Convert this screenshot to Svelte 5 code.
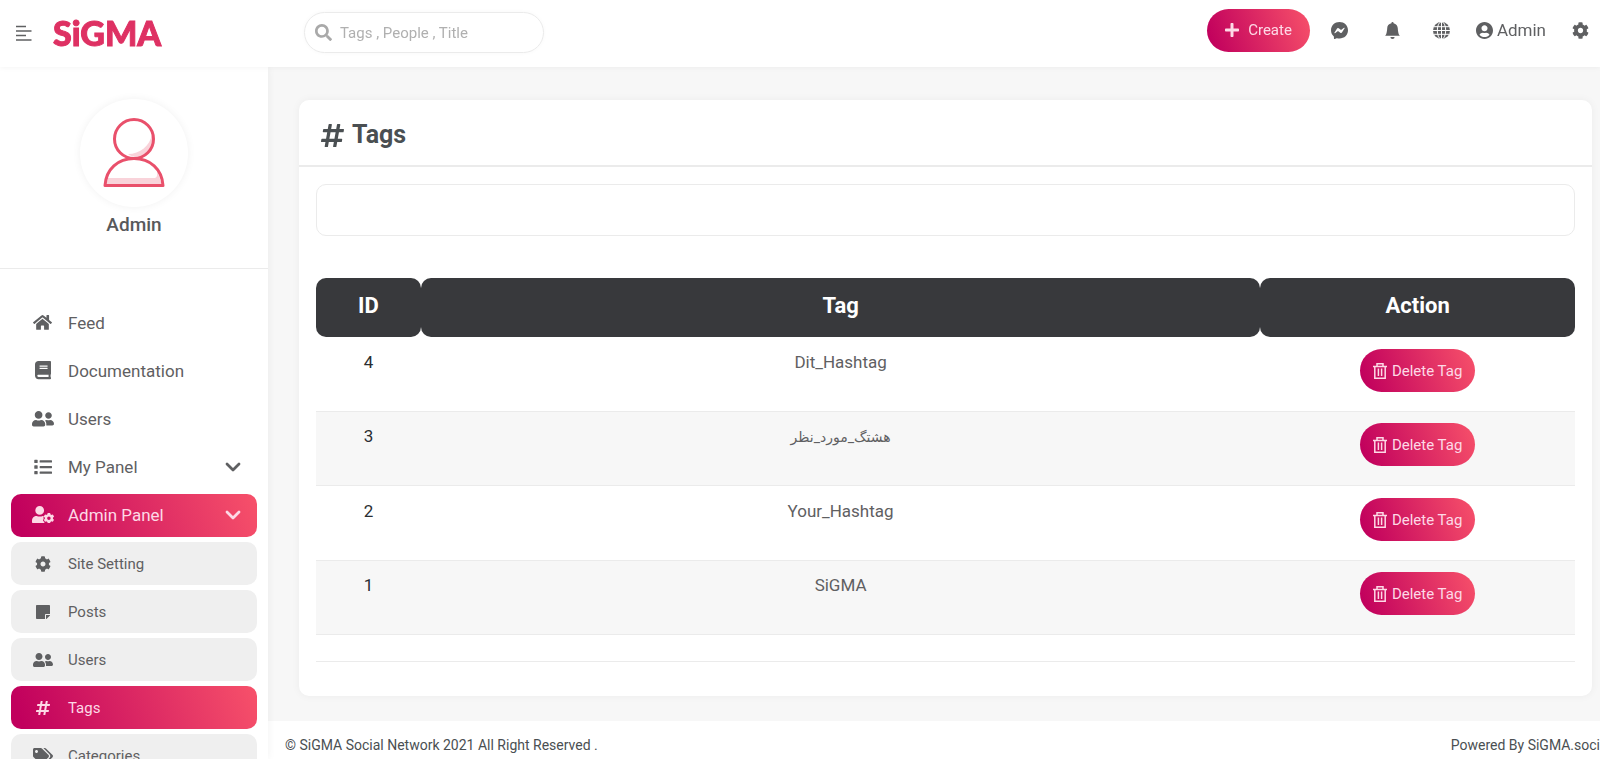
<script>

    let search = $state('')
    let tagFilter = $state('')

    const mainLinks = [
        {title: 'Feed', icon: 'home', size: 19},
        {title: 'Documentation', icon: 'book', size: 16},
        {title: 'Users', icon: 'users', size: 22},
        {title: 'My Panel', icon: 'list', size: 18, arrow: true},
        {title: 'Admin Panel', icon: 'userCog', size: 22, arrow: true, active: true}
    ]

    const subLinks = [
        {title: 'Site Setting', icon: 'cog', size: 16},
        {title: 'Posts', icon: 'note', size: 14},
        {title: 'Users', icon: 'users', size: 20},
        {title: 'Tags', icon: 'hashtag', size: 14, active: true},
        {title: 'Categories', icon: 'tags', size: 20}
    ]

    const tags = [
        {id: 4, name: 'Dit_Hashtag'},
        {id: 3, name: 'هشتگ_مورد_نظر', lang: 'fa'},
        {id: 2, name: 'Your_Hashtag'},
        {id: 1, name: 'SiGMA'}
    ]

    const cog = 'M487.4 315.7l-42.6-24.6c4.3-23.2 4.3-47 0-70.2l42.6-24.6c4.9-2.8 7.1-8.6 5.5-14-11.1-35.6-30-67.8-54.7-94.6-3.8-4.1-10-5.1-14.8-2.3L380.8 110c-17.9-15.4-38.5-27.3-60.8-35.1V25.8c0-5.6-3.9-10.5-9.4-11.7-36.7-8.2-74.3-7.8-109.2 0-5.5 1.2-9.4 6.1-9.4 11.7V75c-22.2 7.9-42.8 19.8-60.8 35.1L88.7 85.5c-4.9-2.8-11-1.9-14.8 2.3-24.7 26.7-43.6 58.9-54.7 94.6-1.7 5.4.6 11.2 5.5 14L67.3 221c-4.3 23.2-4.3 47 0 70.2l-42.6 24.6c-4.9 2.8-7.1 8.6-5.5 14 11.1 35.6 30 67.8 54.7 94.6 3.8 4.1 10 5.1 14.8 2.3l42.6-24.6c17.9 15.4 38.5 27.3 60.8 35.1v49.2c0 5.6 3.9 10.5 9.4 11.7 36.7 8.2 74.3 7.8 109.2 0 5.5-1.2 9.4-6.1 9.4-11.7v-49.2c22.2-7.9 42.8-19.8 60.8-35.1l42.6 24.6c4.9 2.8 11 1.9 14.8-2.3 24.7-26.7 43.6-58.9 54.7-94.6 1.5-5.5-.7-11.3-5.6-14.1zM256 336c-44.1 0-80-35.9-80-80s35.9-80 80-80 80 35.9 80 80-35.9 80-80 80z'

    const icons = {
        cog: {box: '0 0 512 512', path: cog},
        search: {box: '0 0 512 512', path: 'M505 442.7L405.3 343c-4.5-4.5-10.6-7-17-7H372c27.6-35.3 44-79.7 44-128C416 93.1 322.9 0 208 0S0 93.1 0 208s93.1 208 208 208c48.3 0 92.7-16.4 128-44v16.3c0 6.4 2.5 12.5 7 17l99.7 99.7c9.4 9.4 24.6 9.4 33.9 0l28.3-28.3c9.4-9.4 9.4-24.6.1-34zM208 336c-70.7 0-128-57.2-128-128 0-70.7 57.2-128 128-128 70.7 0 128 57.2 128 128 0 70.7-57.2 128-128 128z'},
        plus: {box: '0 0 448 512', path: 'M416 208H272V64c0-17.67-14.33-32-32-32h-32c-17.67 0-32 14.33-32 32v144H32c-17.67 0-32 14.33-32 32v32c0 17.67 14.33 32 32 32h144v144c0 17.67 14.33 32 32 32h32c17.67 0 32-14.33 32-32V304h144c17.67 0 32-14.33 32-32v-32c0-17.67-14.33-32-32-32z'},
        messenger: {box: '0 0 16 16', path: 'M0 7.76C0 3.301 3.493 0 8 0s8 3.301 8 7.76-3.493 7.76-8 7.76c-.81 0-1.586-.107-2.316-.307a.639.639 0 0 0-.427.03l-1.588.702a.64.64 0 0 1-.898-.566l-.044-1.423a.639.639 0 0 0-.215-.456C.956 12.108 0 10.092 0 7.76zm5.546-1.459-2.35 3.728c-.225.358.214.761.551.506l2.525-1.916a.48.48 0 0 1 .578-.002l1.869 1.402a1.2 1.2 0 0 0 1.735-.32l2.35-3.728c.226-.358-.214-.761-.551-.506L9.728 7.381a.48.48 0 0 1-.578.002L7.281 5.98a1.2 1.2 0 0 0-1.735.32z'},
        bell: {box: '0 0 16 16', path: 'M8 16a2 2 0 0 0 2-2H6a2 2 0 0 0 2 2zm.995-14.901a1 1 0 1 0-1.99 0A5.002 5.002 0 0 0 3 6c0 1.098-.5 6-2 7h14c-1.5-1-2-5.902-2-7 0-2.42-1.72-4.44-4.005-4.901z'},
        userCircle: {box: '0 8 496 496', path: 'M248 8C111 8 0 119 0 256s111 248 248 248 248-111 248-248S385 8 248 8zm0 96c48.6 0 88 39.4 88 88s-39.4 88-88 88-88-39.4-88-88 39.4-88 88-88zm0 344c-58.7 0-111.3-26.6-146.5-68.2 18.8-35.4 55.6-59.8 98.5-59.8 2.4 0 4.8.4 7.1 1.1 13 4.2 26.6 6.9 40.9 6.9 14.3 0 28-2.7 40.9-6.9 2.3-.7 4.7-1.1 7.1-1.1 42.9 0 79.7 24.4 98.5 59.8C359.3 421.4 306.7 448 248 448z'},
        home: {box: '0 0 576 512', path: 'M280.37 148.26L96 300.11V464a16 16 0 0 0 16 16l112.06-.29a16 16 0 0 0 15.92-16V368a16 16 0 0 1 16-16h64a16 16 0 0 1 16 16v95.64a16 16 0 0 0 16 16.05L464 480a16 16 0 0 0 16-16V300L295.67 148.26a12.19 12.19 0 0 0-15.3 0zM571.6 251.47L488 182.56V44.05a12 12 0 0 0-12-12h-56a12 12 0 0 0-12 12v72.61L318.47 43a48 48 0 0 0-61 0L4.34 251.47a12 12 0 0 0-1.6 16.9l25.5 31A12 12 0 0 0 45.15 301l235.22-193.74a12.19 12.19 0 0 1 15.3 0L530.9 301a12 12 0 0 0 16.9-1.6l25.5-31a12 12 0 0 0-1.7-16.93z'},
        book: {box: '0 0 448 512', path: 'M448 360V24c0-13.3-10.7-24-24-24H96C43 0 0 43 0 96v320c0 53 43 96 96 96h328c13.3 0 24-10.7 24-24v-16c0-7.5-3.5-14.3-8.9-18.7-4.2-15.4-4.2-59.3 0-74.7 5.4-4.3 8.9-11.1 8.9-18.6zM128 134c0-3.3 2.7-6 6-6h212c3.3 0 6 2.7 6 6v20c0 3.3-2.7 6-6 6H134c-3.3 0-6-2.7-6-6v-20zm0 64c0-3.3 2.7-6 6-6h212c3.3 0 6 2.7 6 6v20c0 3.3-2.7 6-6 6H134c-3.3 0-6-2.7-6-6v-20zm253.4 250H96c-17.7 0-32-14.3-32-32 0-17.6 14.4-32 32-32h285.4c-1.9 17.1-1.9 46.9 0 64z'},
        users: {box: '0 0 640 512', path: 'M192 256c61.9 0 112-50.1 112-112S253.9 32 192 32 80 82.1 80 144s50.1 112 112 112zm76.8 32h-8.3c-20.8 10-43.9 16-68.5 16s-47.6-6-68.5-16h-8.3C51.6 288 0 339.6 0 403.2V432c0 26.5 21.5 48 48 48h288c26.5 0 48-21.5 48-48v-28.8c0-63.6-51.6-115.2-115.2-115.2zM480 256c53 0 96-43 96-96s-43-96-96-96-96 43-96 96 43 96 96 96zm48 32h-3.8c-13.9 4.8-28.6 8-44.2 8s-30.3-3.2-44.2-8H432c-20.4 0-39.2 5.9-55.7 15.4 24.4 26.3 39.7 61.2 39.7 99.8v38.4c0 2.2-.5 4.3-.6 6.4H592c26.5 0 48-21.5 48-48 0-61.9-50.1-112-112-112z'},
        list: {box: '0 0 512 512', path: 'M24 48h64a16 16 0 0 1 16 16v64a16 16 0 0 1-16 16H24a16 16 0 0 1-16-16V64a16 16 0 0 1 16-16zm0 160h64a16 16 0 0 1 16 16v64a16 16 0 0 1-16 16H24a16 16 0 0 1-16-16v-64a16 16 0 0 1 16-16zm0 160h64a16 16 0 0 1 16 16v64a16 16 0 0 1-16 16H24a16 16 0 0 1-16-16v-64a16 16 0 0 1 16-16zM176 64h320a16 16 0 0 1 16 16v32a16 16 0 0 1-16 16H176a16 16 0 0 1-16-16V80a16 16 0 0 1 16-16zm0 160h320a16 16 0 0 1 16 16v32a16 16 0 0 1-16 16H176a16 16 0 0 1-16-16v-32a16 16 0 0 1 16-16zm0 160h320a16 16 0 0 1 16 16v32a16 16 0 0 1-16 16H176a16 16 0 0 1-16-16v-32a16 16 0 0 1 16-16z'},
        note: {box: '0 32 448 448', path: 'M312 320h136V56c0-13.3-10.7-24-24-24H24C10.7 32 0 42.7 0 56v400c0 13.3 10.7 24 24 24h264V344c0-13.2 10.8-24 24-24zm129 55l-98 98c-4.5 4.5-10.6 7-17 7h-6V352h128v6.1c0 6.3-2.5 12.4-7 16.9z'},
        hashtag: {box: '0 32 448 448', path: 'M440.667 182.109l7.143-40c1.313-7.355-4.342-14.109-11.813-14.109h-74.81l14.623-81.891C377.123 38.754 371.468 32 363.997 32h-40.632a12 12 0 0 0-11.813 9.891L296.175 128H197.54l14.623-81.891C213.477 38.754 207.822 32 200.35 32h-40.632a12 12 0 0 0-11.813 9.891L132.528 128H53.432a12 12 0 0 0-11.813 9.891l-7.143 40C33.163 185.246 38.818 192 46.289 192h74.81L98.242 320H19.146a12 12 0 0 0-11.813 9.891l-7.143 40C-1.123 377.246 4.532 384 12.003 384h74.81L72.19 465.891C70.877 473.246 76.532 480 84.003 480h40.632a12 12 0 0 0 11.813-9.891L151.826 384h98.634l-14.623 81.891C234.523 473.246 240.178 480 247.65 480h40.632a12 12 0 0 0 11.813-9.891L315.472 384h79.096a12 12 0 0 0 11.813-9.891l7.143-40c1.313-7.355-4.342-14.109-11.813-14.109h-74.81l22.857-128h79.096a12 12 0 0 0 11.813-9.891zM261.889 320h-98.634l22.857-128h98.634l-22.857 128z'},
        tags: {box: '0 0 640 512', path: 'M497.941 225.941L286.059 14.059A48 48 0 0 0 252.118 0H48C21.49 0 0 21.49 0 48v204.118a48 48 0 0 0 14.059 33.941l211.882 211.882c18.744 18.745 49.136 18.746 67.882 0l204.118-204.118c18.745-18.745 18.745-49.137 0-67.882zM112 160c-26.51 0-48-21.49-48-48s21.49-48 48-48 48 21.49 48 48-21.49 48-48 48zm513.941 133.823L421.823 497.941c-18.745 18.745-49.137 18.745-67.882 0l-.36-.36L527.64 323.522c16.999-16.999 26.362-39.6 26.362-63.64s-9.362-46.641-26.362-63.64L331.397 0h48.721a48 48 0 0 1 33.941 14.059l211.882 211.882c18.745 18.745 18.745 49.137 0 67.882z'}
    }

</script>

{#snippet icon(name, size)}
    {#if name === 'userCog'}
        <svg width={size} viewBox="0 0 640 512" fill="currentColor" aria-hidden="true">
            <path d="M224 256c70.700 0 128-57.300 128-128S294.700 0 224 0 96 57.300 96 128s57.300 128 128 128zM313 288c-27 14-58 20-89 20s-62-6-89-20C60 288 0 348 0 422v42c0 26 22 48 48 48h330c-20-16-22-34-20-46-22-16-44-34-34-62l16-40c-14-22-4-44 10-56-12-12-24-18-37-20z" />
            <path d={cog} transform="translate(333 196) scale(.62)" />
        </svg>
    {:else if name === 'globe'}
        <svg width={size} viewBox="0 0 17 17" aria-hidden="true">
            <circle cx="8.5" cy="8.5" r="8.5" fill="currentColor" />
            <g fill="none" stroke="#fff">
                <ellipse cx="8.500" cy="8.500" rx="4.200" ry="8.800" />
                <path d="M8.500 0v17M0 8.500h17M1 4.700h15M1 12.300h15" />
            </g>
        </svg>
    {:else if name === 'trash'}
        <svg width={size} viewBox="0 0 14 16" fill="none" stroke="currentColor" stroke-width="1.500" aria-hidden="true">
            <path d="M0 3.500h14M1.800 3.500v11.700h10.400v-11.700M4 3.300v-2.500h6v2.500M5.400 5.500v7.500M8.600 5.500v7.500" />
        </svg>
    {:else if name === 'chevron'}
        <svg width={size} viewBox="0 0 16 10" fill="none" stroke="currentColor" stroke-width="2.800" stroke-linecap="round" stroke-linejoin="round" aria-hidden="true">
            <path d="M2 2l6 6 6-6" />
        </svg>
    {:else}
        <svg width={size} viewBox={icons[name].box} fill="currentColor" aria-hidden="true">
            <path d={icons[name].path} />
        </svg>
    {/if}
{/snippet}

{#snippet navItem(link, sub)}
    <li>
        <a href="./" class="nav-link" class:sub class:active={link.active}>
            <span class="nav-icon">{@render icon(link.icon, link.size)}</span>
            <span class="nav-title">{link.title}</span>
            {#if link.arrow}
                {@render icon('chevron', 16)}
            {/if}
        </a>
    </li>
{/snippet}

<div class="page">
    <header>
        <div class="brand">
            <button class="toggle" aria-label="Toggle menu">
                <svg width="16" viewBox="0 0 16 16" stroke="currentColor" stroke-width="1.600" aria-hidden="true">
                    <path d="M0 1.500h10M0 6h15.500M0 10.500h10M0 15h15.500" />
                </svg>
            </button>
            <a href="./" class="logo">SiGMA</a>
        </div>
        <label class="search">
            {@render icon('search', 17)}
            <input type="text" placeholder="Tags , People , Title" aria-label="Search" bind:value={search}>
        </label>
        <div class="actions">
            <button class="gradient create">{@render icon('plus', 14)} Create</button>
            <button class="action wide" aria-label="Messages">{@render icon('messenger', 17)}</button>
            <button class="action wide" aria-label="Notifications">{@render icon('bell', 17)}</button>
            <button class="action" aria-label="Language">{@render icon('globe', 17)}</button>
            <a href="./" class="action user">{@render icon('userCircle', 17)} Admin</a>
            <button class="action" aria-label="Settings">{@render icon('cog', 17)}</button>
        </div>
    </header>

    <div class="body">
        <aside>
            <div class="profile">
                <div class="avatar">
                    <svg width="62" viewBox="0 0 62 70" fill="none" aria-hidden="true">
                        <path d="M49 16c-2 12-12 20-24 20c4 4 18 5 24-5 3-5 3-10 0-15z" fill="#f9d3da" />
                        <path d="M4 60h48q3-1 2-8l5 15H3z" fill="#f9d3da" />
                        <circle cx="31" cy="21" r="19.500" stroke="#e9506b" stroke-width="3" />
                        <path d="M2 67.500C3 51 15 40.500 31 40.500S59 51 60 67.500z" stroke="#e9506b" stroke-width="3" stroke-linejoin="round" />
                    </svg>
                </div>
                <strong>Admin</strong>
            </div>
            <nav>
                <ul>
                    {#each mainLinks as link}
                        {@render navItem(link, false)}
                    {/each}
                    {#each subLinks as link}
                        {@render navItem(link, true)}
                    {/each}
                </ul>
            </nav>
        </aside>

        <div class="content">
            <main>
                <section class="card">
                    <h1>{@render icon('hashtag', 23)} Tags</h1>
                    <div class="card-body">
                        <input type="text" class="filter" aria-label="Filter tags" bind:value={tagFilter}>
                        <table>
                            <thead>
                                <tr>
                                    <th class="col-id">ID</th>
                                    <th>Tag</th>
                                    <th class="col-action">Action</th>
                                </tr>
                            </thead>
                            <tbody>
                                {#each tags as tag (tag.id)}
                                    <tr>
                                        <td class="id">{tag.id}</td>
                                        <td><bdi lang={tag.lang} class:fa={tag.lang === 'fa'}>{tag.name}</bdi></td>
                                        <td>
                                            <button class="gradient delete">{@render icon('trash', 14)} Delete Tag</button>
                                        </td>
                                    </tr>
                                {/each}
                            </tbody>
                        </table>
                        <hr>
                    </div>
                </section>
            </main>
            <footer>
                <span>© SiGMA Social Network 2021 All Right Reserved .</span>
                <span>Powered By SiGMA.soci</span>
            </footer>
        </div>
    </div>
</div>

<style>

    :global(body) {
        margin: 0;
    }

    .page {
        --text: #5f6062;
        --dark: #4a4f52;
        --line: #ebebeb;
        --gradient: linear-gradient(70deg, #c1005d 5%, #f7516a);
        display: flex;
        flex-direction: column;
        height: 100vh;
        overflow: hidden;
        background-color: #f7f7f7;
        color: var(--text);
        font-family: Roboto, "DejaVu Sans", sans-serif;
        font-size: 17px;
        line-height: 26px;
    }

    .page * {
        box-sizing: border-box;
    }

    a {
        color: inherit;
        text-decoration: none;
    }

    button {
        padding: 0;
        border: none;
        background: none;
        color: inherit;
        font: inherit;
        cursor: pointer;
    }

    svg {
        display: block;
        flex-shrink: 0;
    }

    header {
        display: flex;
        align-items: center;
        flex-shrink: 0;
        height: 67px;
        padding-bottom: 2px;
        background-color: white;
        box-shadow: 0 0 6px rgba(0, 0, 0, .06);
        z-index: 2;
    }

    .brand {
        display: flex;
        align-items: center;
        gap: 21px;
        width: 304px;
        padding-left: 16px;
    }

    .logo {
        color: #de3163;
        font-family: Lato, sans-serif;
        font-size: 34px;
        font-weight: 900;
        line-height: 40px;
        -webkit-text-stroke: 1px #de3163;
    }

    .search {
        display: flex;
        align-items: center;
        gap: 8px;
        width: 240px;
        height: 41px;
        padding: 0 10px;
        border: 1px solid var(--line);
        border-radius: 21px;
        box-shadow: 0 0 4px rgba(0, 0, 0, .03);
        color: #a9a9a9;
    }

    .search input {
        flex: 1;
        min-width: 0;
        padding: 0;
        border: none;
        outline: none;
        background: none;
        color: var(--text);
        font: inherit;
        font-size: 15px;
    }

    .search input::placeholder {
        color: #b0b0b0;
    }

    .actions {
        display: flex;
        align-items: center;
        margin-left: auto;
        padding-bottom: 5px;
    }

    .action {
        display: flex;
        align-items: center;
        gap: 4px;
        padding: 0 14px;
    }

    .action:last-child {
        padding-right: 11px;
    }

    .wide {
        padding: 0 18px;
    }

    .user {
        padding: 0 12px;
    }

    .gradient {
        display: inline-flex;
        align-items: center;
        height: 43px;
        border-radius: 22px;
        background-image: var(--gradient);
        color: #fdd9e6;
        font-size: 15px;
    }

    .create {
        gap: 9px;
        margin-right: 3px;
        padding: 0 18px;
    }

    .body {
        display: flex;
        flex: 1;
        min-height: 0;
    }

    aside {
        flex-shrink: 0;
        width: 268px;
        overflow-y: auto;
        scrollbar-width: none;
        background-color: white;
        box-shadow: 0 0 8px rgba(0, 0, 0, .06);
        z-index: 1;
    }

    .profile {
        display: flex;
        flex-direction: column;
        align-items: center;
        gap: 5px;
        padding: 32px 0 30px;
        border-bottom: 1px solid var(--line);
    }

    .avatar {
        display: flex;
        align-items: center;
        justify-content: center;
        width: 108px;
        height: 108px;
        border-radius: 50%;
        box-shadow: 0 0 8px rgba(0, 0, 0, .06);
    }

    .profile strong {
        color: #58595b;
        font-size: 19px;
        font-weight: 500;
    }

    nav {
        padding: 33px 11px 0;
    }

    ul {
        display: flex;
        flex-direction: column;
        gap: 5px;
        margin: 0;
        padding: 0;
        list-style: none;
    }

    .nav-link {
        display: flex;
        align-items: center;
        height: 43px;
        padding: 0 16px 2px 15px;
        border-radius: 10px;
    }

    .nav-icon {
        display: flex;
        justify-content: center;
        width: 33px;
        margin-right: 9px;
    }

    .nav-title {
        flex: 1;
    }

    .sub {
        padding-bottom: 0;
        background-color: #efefef;
        font-size: 15px;
    }

    .active {
        background-image: var(--gradient);
        color: #fdd9e6;
    }

    .content {
        display: flex;
        flex: 1;
        flex-direction: column;
        min-width: 0;
    }

    main {
        padding: 33px 8px 25px 31px;
    }

    .card {
        border-radius: 10px;
        background-color: white;
        box-shadow: 0 0 8px rgba(0, 0, 0, .05);
    }

    h1 {
        display: flex;
        align-items: center;
        gap: 8px;
        margin: 0;
        padding: 19px 22px 14px;
        border-bottom: 2px solid var(--line);
        color: var(--dark);
        font-size: 25px;
        font-weight: 700;
        line-height: 32px;
    }

    .card-body {
        padding: 17px 17px 34px;
    }

    .filter {
        display: block;
        width: 100%;
        height: 52px;
        margin-bottom: 42px;
        padding: 0 16px;
        border: 1px solid var(--line);
        border-radius: 10px;
        outline: none;
        color: var(--text);
        font: inherit;
    }

    table {
        width: 100%;
        border-spacing: 0;
        table-layout: fixed;
        text-align: center;
    }

    th {
        height: 59px;
        padding: 0 0 4px;
        border-radius: 10px;
        background-color: #38393c;
        color: white;
        font-size: 22px;
        font-weight: 700;
    }

    .col-id {
        width: 8.3333%;
    }

    .col-action {
        width: 25%;
    }

    td {
        height: 74px;
        padding: 12px;
        vertical-align: top;
    }

    tr:nth-child(even) td {
        height: 75px;
        padding-top: 11px;
        border: solid var(--line);
        border-width: 1px 0;
        background-color: #f7f7f7;
    }

    .id {
        color: #2b2e31;
    }

    .fa {
        font-size: 14px;
    }

    .delete {
        gap: 5px;
        padding: 0 13px;
        vertical-align: top;
    }

    hr {
        margin: 26px 0 0;
        border: none;
        border-top: 1px solid var(--line);
    }

    footer {
        display: flex;
        flex: 1;
        justify-content: space-between;
        padding: 12px 0 0 17px;
        background-color: white;
        color: var(--dark);
        font-size: 14px;
        line-height: 24px;
        white-space: nowrap;
    }

</style>
